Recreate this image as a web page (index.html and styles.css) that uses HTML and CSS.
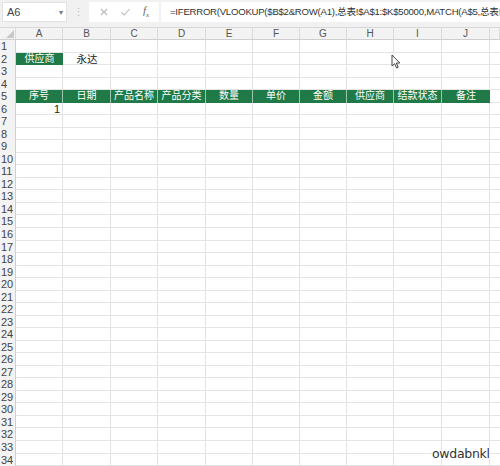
FILE: index.html
```html
<!DOCTYPE html>
<html>
<head>
<meta charset="utf-8">
<link rel="stylesheet" href="styles.css">
</head>
<body>
<div class="app">
  <div class="fbar">
    <div class="namebox"><span class="ref">A6</span><span class="caret">▾</span></div>
    <div class="dots">⋮</div>
    <div class="btns">
      <svg class="ic" width="10" height="10" viewBox="0 0 10 10"><path d="M2 2 L8 8 M8 2 L2 8" stroke="#bbb" stroke-width="1.1" fill="none"/></svg>
      <svg class="ic" width="11" height="10" viewBox="0 0 11 10"><path d="M1.5 5.5 L4.3 8 L9.5 2" stroke="#bbb" stroke-width="1.1" fill="none"/></svg>
      <span class="fx">f<sub>x</sub></span>
    </div>
    <div class="formula"><span class="ftext">=IFERROR(VLOOKUP($B$2&amp;ROW(A1),总表!$A$1:$K$50000,MATCH(A$5,总表!$A$5:$K$5,0),0),"")</span></div>
  </div>
  <div class="colhead">
    <div class="corner"><svg width="8" height="8" viewBox="0 0 8 8"><path d="M8 0 L8 8 L0 8 Z" fill="#c8c8c8"/></svg></div>
    <div>A</div><div>B</div><div>C</div><div>D</div><div>E</div><div>F</div><div>G</div><div>H</div><div>I</div><div>J</div><div></div>
  </div>
  <div class="sheet">
    <div class="row"><div class="rh">1</div></div>
    <div class="row"><div class="rh">2</div><div class="cell green">供应商</div><div class="cell val">永达</div></div>
    <div class="row"><div class="rh">3</div></div>
    <div class="row"><div class="rh">4</div></div>
    <div class="row"><div class="rh">5</div>
      <div class="cell hd">序号</div><div class="cell hd">日期</div><div class="cell hd">产品名称</div><div class="cell hd">产品分类</div><div class="cell hd">数量</div><div class="cell hd">单价</div><div class="cell hd">金额</div><div class="cell hd">供应商</div><div class="cell hd">结款状态</div><div class="cell hd last">备注</div>
    </div>
    <div class="row"><div class="rh">6</div><div class="cell num">1</div></div>
    <div class="row"><div class="rh">7</div></div>
    <div class="row"><div class="rh">8</div></div>
    <div class="row"><div class="rh">9</div></div>
    <div class="row"><div class="rh">10</div></div>
    <div class="row"><div class="rh">11</div></div>
    <div class="row"><div class="rh">12</div></div>
    <div class="row"><div class="rh">13</div></div>
    <div class="row"><div class="rh">14</div></div>
    <div class="row"><div class="rh">15</div></div>
    <div class="row"><div class="rh">16</div></div>
    <div class="row"><div class="rh">17</div></div>
    <div class="row"><div class="rh">18</div></div>
    <div class="row"><div class="rh">19</div></div>
    <div class="row"><div class="rh">20</div></div>
    <div class="row"><div class="rh">21</div></div>
    <div class="row"><div class="rh">22</div></div>
    <div class="row"><div class="rh">23</div></div>
    <div class="row"><div class="rh">24</div></div>
    <div class="row"><div class="rh">25</div></div>
    <div class="row"><div class="rh">26</div></div>
    <div class="row"><div class="rh">27</div></div>
    <div class="row"><div class="rh">28</div></div>
    <div class="row"><div class="rh">29</div></div>
    <div class="row"><div class="rh">30</div></div>
    <div class="row"><div class="rh">31</div></div>
    <div class="row"><div class="rh">32</div></div>
    <div class="row"><div class="rh">33</div></div>
    <div class="row"><div class="rh">34</div></div>
  </div>
  <svg class="cursor" width="10" height="15" viewBox="0 0 10 15"><path d="M1 1 L1 12 L3.6 9.6 L5.6 14 L7.2 13.3 L5.3 9 L8.8 9 Z" fill="#fff" stroke="#444" stroke-width="1"/></svg>
  <div class="wm">owdabnkl</div>
</div>
</body>
</html>
```
FILE: styles.css
```css
* { box-sizing: border-box; }
html, body { margin: 0; padding: 0; }
body {
  width: 500px;
  height: 466px;
  overflow: hidden;
  background: #fff;
  font-family: "Liberation Sans", "Noto Sans CJK SC", sans-serif;
  color: #333;
}
.app {
  position: relative;
  width: 500px;
  height: 466px;
  overflow: hidden;
  display: flex;
  flex-direction: column;
}

.fbar {
  height: 28px;
  flex: none;
  background: #f1f1f1;
  display: flex;
  align-items: flex-start;
  padding-top: 2px;
  border-bottom: 1px solid #d8d8d8;
}
.namebox {
  width: 65px;
  height: 20px;
  margin-left: 2px;
  background: #fff;
  border: 1px solid #e2e2e2;
  display: flex;
  align-items: center;
  justify-content: space-between;
  padding: 0 3px 0 4px;
  font-size: 11px;
  color: #444;
}
.namebox .caret { font-size: 8px; color: #777; }
.dots { width: 22px; text-align: center; color: #bbb; font-size: 11px; line-height: 20px; }
.btns {
  width: 70px;
  height: 20px;
  background: #fff;
  display: flex;
  align-items: center;
  justify-content: space-around;
  padding: 0 4px;
}
.fx { font-family: "Liberation Serif", serif; font-style: italic; font-size: 11px; color: #666; }
.fx sub { font-size: 7px; }
.formula {
  flex: 1;
  min-width: 0;
  height: 20px;
  margin-left: 2px;
  background: #fff;
  font-size: 9.6px;
  line-height: 20px;
  padding-left: 9px;
  white-space: nowrap;
  overflow: hidden;
  color: #333;
  letter-spacing: -0.25px;
}
.ftext { display: inline-block; }

.colhead, .row {
  display: grid;
  grid-template-columns: 16px 47px 48px 47px 48px 47px 47px 47px 47px 48px 48px 1fr;
}
.colhead {
  height: 12px;
  flex: none;
  background: #f3f3f3;
  border-bottom: 1px solid #cfcfcf;
  font-size: 10px;
  color: #555;
}
.colhead > div {
  text-align: center;
  line-height: 11px;
  border-right: 1px solid #dadada;
}
.corner { display: flex; align-items: flex-end; justify-content: flex-end; padding: 0 1px 1px 0; }

.sheet {
  flex: 1;
  display: flex;
  flex-direction: column;
  background:
    linear-gradient(#e2e2e2, #e2e2e2) 62px 0 / 1px 100% no-repeat,
    linear-gradient(#e2e2e2, #e2e2e2) 110px 0 / 1px 100% no-repeat,
    linear-gradient(#e2e2e2, #e2e2e2) 157px 0 / 1px 100% no-repeat,
    linear-gradient(#e2e2e2, #e2e2e2) 205px 0 / 1px 100% no-repeat,
    linear-gradient(#e2e2e2, #e2e2e2) 252px 0 / 1px 100% no-repeat,
    linear-gradient(#e2e2e2, #e2e2e2) 299px 0 / 1px 100% no-repeat,
    linear-gradient(#e2e2e2, #e2e2e2) 346px 0 / 1px 100% no-repeat,
    linear-gradient(#e2e2e2, #e2e2e2) 393px 0 / 1px 100% no-repeat,
    linear-gradient(#e2e2e2, #e2e2e2) 441px 0 / 1px 100% no-repeat,
    linear-gradient(#e2e2e2, #e2e2e2) 489px 0 / 1px 100% no-repeat,
    #fff;
}
.row {
  flex: 1 1 0;
  min-height: 0;
  border-bottom: 1px solid #e4e4e4;
  font-size: 11px;
}
.rh {
  background: #f3f3f3;
  border-right: 1px solid #cfcfcf;
  color: #444;
  font-size: 11px;
  line-height: 12px;
  padding-left: 1px;
  text-align: left;
  margin-bottom: -1px;
  overflow: hidden;
}
.cell {
  line-height: 12px;
  text-align: center;
  white-space: nowrap;
  overflow: hidden;
  font-size: 10px;
}
.green {
  background: #1f7a47;
  color: #fff;
  margin-bottom: -1px;
}
.val { color: #222; font-size: 10.5px; }
.hd {
  background: #1f7a47;
  color: #fff;
  border-right: 1px solid #9cc7ad;
  margin-bottom: -1px;
}
.hd.last { border-right: none; }
.num { text-align: right; padding-right: 3px; color: #222; font-size: 11px; }

.cursor { position: absolute; left: 391px; top: 54px; }
.wm {
  position: absolute;
  left: 432px;
  top: 446px;
  font-family: "DejaVu Sans", sans-serif;
  font-size: 12.5px;
  color: #333;
  letter-spacing: -0.3px;
  text-shadow: 1px 1px 0 #fff, -1px -1px 0 #fff, 1px -1px 0 #fff, -1px 1px 0 #fff;
}
```
